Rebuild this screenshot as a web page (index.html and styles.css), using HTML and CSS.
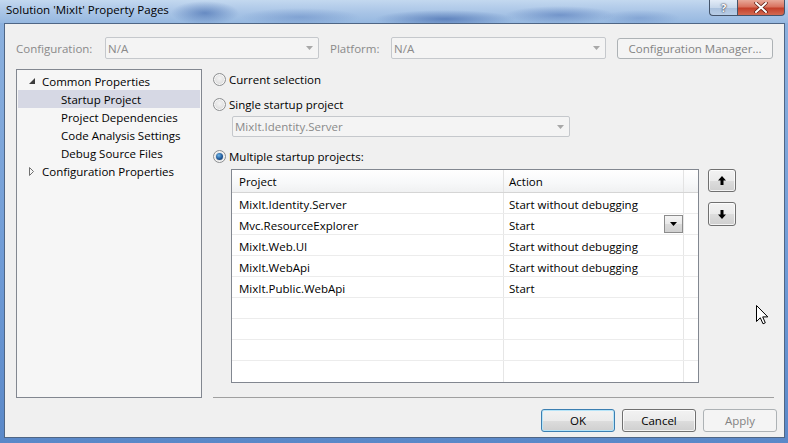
FILE: index.html
```html
<!DOCTYPE html>
<html>
<head>
<meta charset="utf-8">
<link rel="stylesheet" href="styles.css">
</head>
<body>
<div class="window">
  <div class="titlebar">
    <span class="title">Solution 'MixIt' Property Pages</span>
    <div class="caption-btns">
      <div class="cbtn help"><span class="qmark">?</span></div>
      <div class="cbtn close">
        <svg width="14" height="11" viewBox="0 0 14 11"><path d="M2 1 L12 10 M12 1 L2 10" stroke="#5a1a10" stroke-width="3.4" stroke-linecap="round"/><path d="M2 1 L12 10 M12 1 L2 10" stroke="#ffffff" stroke-width="2" stroke-linecap="round"/></svg>
      </div>
    </div>
  </div>
  <div class="client">
    <div class="config-row">
      <span class="lbl lbl-config">Configuration:</span>
      <div class="combo disabled combo-config"><span>N/A</span><svg class="carrow" width="7" height="4" viewBox="0 0 7 4"><path d="M0 0 L7 0 L3.5 4 Z" fill="#a8a8a8"/></svg></div>
      <span class="lbl lbl-platform">Platform:</span>
      <div class="combo disabled combo-platform"><span>N/A</span><svg class="carrow" width="7" height="4" viewBox="0 0 7 4"><path d="M0 0 L7 0 L3.5 4 Z" fill="#a8a8a8"/></svg></div>
      <div class="btn disabled btn-cfgmgr">Configuration Manager...</div>
    </div>
    <div class="main">
      <div class="tree">
        <div class="trow lvl0">
          <span class="exp"><svg width="8" height="8" viewBox="0 0 8 8"><path d="M7 1 L7 7 L1 7 Z" fill="#3c3c3c"/></svg></span>
          <span>Common Properties</span>
        </div>
        <div class="trow lvl1 selected"><span>Startup Project</span></div>
        <div class="trow lvl1"><span>Project Dependencies</span></div>
        <div class="trow lvl1"><span>Code Analysis Settings</span></div>
        <div class="trow lvl1"><span>Debug Source Files</span></div>
        <div class="trow lvl0">
          <span class="exp"><svg width="8" height="9" viewBox="0 0 8 9"><path d="M1.5 0.5 L5.5 4.5 L1.5 8.5 Z" fill="none" stroke="#707070" stroke-width="1"/></svg></span>
          <span>Configuration Properties</span>
        </div>
      </div>
      <div class="pane">
        <div class="radio-row r1"><span class="radio"></span><span>Current selection</span></div>
        <div class="radio-row r2"><span class="radio"></span><span>Single startup project</span></div>
        <div class="combo disabled combo-single"><span>MixIt.Identity.Server</span><svg class="carrow" width="7" height="4" viewBox="0 0 7 4"><path d="M0 0 L7 0 L3.5 4 Z" fill="#a8a8a8"/></svg></div>
        <div class="radio-row r3"><span class="radio checked"></span><span>Multiple startup projects:</span></div>
        <div class="grid-row">
          <div class="grid">
            <div class="ghead">
              <div class="gc c1">Project</div><div class="gc c2">Action</div><div class="gc c3"></div>
            </div>
            <div class="grow"><div class="gc c1">MixIt.Identity.Server</div><div class="gc c2">Start without debugging</div><div class="gc c3"></div></div>
            <div class="grow"><div class="gc c1">Mvc.ResourceExplorer</div><div class="gc c2 with-drop"><span class="celltext">Start</span><span class="dropbtn"><svg width="7" height="4" viewBox="0 0 7 4"><path d="M0 0 L7 0 L3.5 4 Z" fill="#000"/></svg></span></div><div class="gc c3"></div></div>
            <div class="grow"><div class="gc c1">MixIt.Web.UI</div><div class="gc c2">Start without debugging</div><div class="gc c3"></div></div>
            <div class="grow"><div class="gc c1">MixIt.WebApi</div><div class="gc c2">Start without debugging</div><div class="gc c3"></div></div>
            <div class="grow"><div class="gc c1">MixIt.Public.WebApi</div><div class="gc c2">Start</div><div class="gc c3"></div></div>
            <div class="grow"><div class="gc c1"></div><div class="gc c2"></div><div class="gc c3"></div></div>
            <div class="grow"><div class="gc c1"></div><div class="gc c2"></div><div class="gc c3"></div></div>
            <div class="grow"><div class="gc c1"></div><div class="gc c2"></div><div class="gc c3"></div></div>
            <div class="grow last"><div class="gc c1"></div><div class="gc c2"></div><div class="gc c3"></div></div>
          </div>
          <div class="movebtns">
            <div class="btn mbtn up"><svg width="8" height="9" viewBox="0 0 8 9"><path d="M4 0 L8 4.5 L5.5 4.5 L5.5 9 L2.5 9 L2.5 4.5 L0 4.5 Z" fill="#000"/></svg></div>
            <div class="btn mbtn down"><svg width="8" height="9" viewBox="0 0 8 9"><path d="M4 9 L8 4.5 L5.5 4.5 L5.5 0 L2.5 0 L2.5 4.5 L0 4.5 Z" fill="#000"/></svg></div>
          </div>
        </div>
        <div class="sep"></div>
      </div>
    </div>
    <div class="footer">
      <div class="btn default">OK</div>
      <div class="btn">Cancel</div>
      <div class="btn disabled">Apply</div>
    </div>
  </div>
  <svg class="cursor" width="13" height="20" viewBox="0 0 13 20"><path d="M0.5 0.5 L0.5 16.5 L4.3 12.8 L7 18.8 L9.3 17.8 L6.7 11.9 L11.8 11.9 Z" fill="#ffffff" stroke="#000" stroke-width="1" stroke-linejoin="miter"/></svg>
</div>
</body>
</html>
```
FILE: styles.css
```css
* { box-sizing: border-box; }
html, body { margin: 0; padding: 0; }
body {
  width: 788px;
  height: 443px;
  overflow: hidden;
  font-family: "Open Sans", "Noto Sans", sans-serif;
  font-size: 11.5px;
  color: #000;
}
.window {
  position: relative;
  width: 788px;
  height: 443px;
  display: flex;
  flex-direction: column;
  background: linear-gradient(180deg, #8fb3df 0%, #6f9bd6 60%, #5a88c8 100%);
}
.titlebar {
  height: 23px;
  flex: none;
  display: flex;
  justify-content: space-between;
  align-items: flex-start;
  background:
    radial-gradient(ellipse 34px 12px at 205px 13px, rgba(50, 92, 165, 0.55), rgba(50, 92, 165, 0)),
    radial-gradient(ellipse 60px 9px at 300px 17px, rgba(70, 110, 180, 0.35), rgba(70, 110, 180, 0)),
    radial-gradient(ellipse 70px 9px at 445px 19px, rgba(45, 85, 160, 0.55), rgba(45, 85, 160, 0)),
    radial-gradient(ellipse 55px 9px at 560px 15px, rgba(55, 95, 170, 0.45), rgba(55, 95, 170, 0)),
    radial-gradient(ellipse 40px 8px at 640px 18px, rgba(70, 110, 180, 0.3), rgba(70, 110, 180, 0)),
    linear-gradient(180deg, #c3d8ef 0%, #a8c4e6 55%, #96b8e0 100%);
}
.title {
  padding-left: 6px;
  line-height: 19px;
  color: #000;
}
.caption-btns {
  display: flex;
  margin-right: 3px;
}
.cbtn {
  height: 16px;
  display: flex;
  align-items: center;
  justify-content: center;
  border: 1px solid #44546a;
  border-top: none;
}
.help {
  width: 28px;
  border-radius: 0 0 0 4px;
  border-right: none;
  background: linear-gradient(180deg, #e3ecf7 0%, #c7d7ea 50%, #a9c0dc 51%, #b8cde6 100%);
}
.qmark {
  color: #fff;
  font-weight: bold;
  font-size: 11px;
  line-height: 13px;
  text-shadow: 0 0 2px #334, 0 0 1px #223;
}
.close {
  width: 48px;
  border-radius: 0 0 4px 0;
  background: linear-gradient(180deg, #e8a999 0%, #d9735f 45%, #c4402a 55%, #d26a52 100%);
}
.client {
  flex: 1;
  margin: 0 3px 5px 4px;
  border: 1px solid #4f6685;
  background: #f0f0f0;
  display: flex;
  flex-direction: column;
  padding: 13px 0 0 11px;
}
.config-row {
  display: flex;
  align-items: center;
  height: 22px;
}
.lbl { color: #8a8a8a; }
.lbl-config { width: 89px; }
.lbl-platform { width: 61px; margin-left: 11px; }
.combo {
  height: 22px;
  border: 1px solid #c5c8cc;
  border-radius: 2px;
  background: #f4f4f4;
  display: flex;
  align-items: center;
  justify-content: space-between;
  padding: 0 5px 0 2px;
}
.combo.disabled { color: #8a8a8a; }
.combo-config { width: 214px; }
.combo-platform { width: 215px; }
.btn {
  height: 22px;
  border: 1px solid #707070;
  border-radius: 3px;
  background: linear-gradient(180deg, #f2f2f2 0%, #ebebeb 50%, #dddddd 51%, #cfcfcf 100%);
  box-shadow: inset 0 0 0 1px rgba(255, 255, 255, 0.75);
  display: flex;
  align-items: center;
  justify-content: center;
}
.btn.disabled {
  border-color: #adb2b5;
  background: #f4f4f4;
  box-shadow: none;
  color: #838383;
}
.btn-cfgmgr {
  width: 156px;
  height: 21px;
  margin-left: 11px;
}
.main {
  display: flex;
  margin-top: 10px;
  height: 329px;
}
.tree {
  width: 186px;
  height: 329px;
  border: 1px solid #828790;
  background: #f6f6f6;
  padding-top: 2px;
}
.trow {
  height: 18px;
  display: flex;
  align-items: center;
  white-space: nowrap;
}
.lvl0 { padding-left: 11px; }
.lvl1 { padding-left: 44px; }
.exp {
  width: 14px;
  display: flex;
  align-items: center;
}
.trow.selected {
  margin: 0 1px;
  padding-left: 43px;
  background: #d6d8e4;
}
.pane {
  width: 561px;
  margin-left: 11px;
  display: flex;
  flex-direction: column;
}
.radio-row {
  height: 18px;
  display: flex;
  align-items: center;
  white-space: nowrap;
}
.r1 { margin-top: 1px; }
.r2 { margin-top: 7px; }
.r3 { margin-top: 10px; }
.radio {
  width: 13px;
  height: 13px;
  border-radius: 50%;
  border: 1px solid #8d8f91;
  background: radial-gradient(circle at 50% 40%, #f4f4f4 0%, #dcdcdc 70%, #cfcfcf 100%);
  box-shadow: inset 0 0 0 1px #f8f8f8;
  margin-right: 3px;
  position: relative;
}
.radio.checked::after {
  content: "";
  position: absolute;
  left: 2px;
  top: 2px;
  width: 7px;
  height: 7px;
  border-radius: 50%;
  background: radial-gradient(circle at 40% 35%, #6fb6e8 0%, #215a9a 55%, #0f2f5a 100%);
}
.combo-single {
  width: 338px;
  height: 21px;
  margin-top: 3px;
  margin-left: 19px;
}
.grid-row {
  display: flex;
  align-items: flex-start;
  margin-top: 4px;
  margin-left: 18px;
}
.grid {
  width: 468px;
  height: 214px;
  border: 1px solid #828790;
  background: #fff;
}
.ghead, .grow {
  display: grid;
  grid-template-columns: 272px 180px 14px;
}
.ghead {
  height: 23px;
  background: linear-gradient(180deg, #ffffff 0%, #f7f8f9 60%, #f0f1f2 100%);
  border-bottom: 1px solid #d5d5d5;
}
.grow {
  height: 21px;
  border-bottom: 1px solid #ececec;
}
.grow.last { border-bottom: none; height: 21px; }
.gc {
  border-right: 1px solid #e6e6e6;
  display: flex;
  align-items: center;
  white-space: nowrap;
}
.grow .gc { padding-top: 2px; }
.grow .gc.with-drop { padding-top: 0; }
.celltext { padding-top: 2px; }
.ghead .gc { border-right-color: #e3e3e3; }
.gc.c1 { padding-left: 7px; }
.gc.c2 { padding-left: 5px; }
.gc.c3 { border-right: none; }
.with-drop { justify-content: space-between; }
.dropbtn {
  width: 19px;
  height: 18px;
  border: 1px solid #8c8c8c;
  background: linear-gradient(180deg, #f4f4f4 0%, #e8e8e8 50%, #dadada 51%, #d0d0d0 100%);
  display: flex;
  align-items: center;
  justify-content: center;
}
.movebtns {
  margin-left: 9px;
  display: flex;
  flex-direction: column;
  gap: 10px;
}
.mbtn {
  width: 28px;
  height: 23px;
}
.mbtn.down { height: 24px; }
.sep {
  margin-top: auto;
  height: 1px;
  background: #a0a0a0;
}
.footer {
  display: flex;
  justify-content: flex-end;
  gap: 7px;
  padding-right: 7px;
  margin-top: 11px;
}
.footer .btn { width: 74px; height: 23px; }
.footer .btn.default {
  border-color: #3c7fb1;
  box-shadow: inset 0 0 0 1px #b6e4f8;
}
.cursor {
  position: absolute;
  left: 756px;
  top: 305px;
}
```
